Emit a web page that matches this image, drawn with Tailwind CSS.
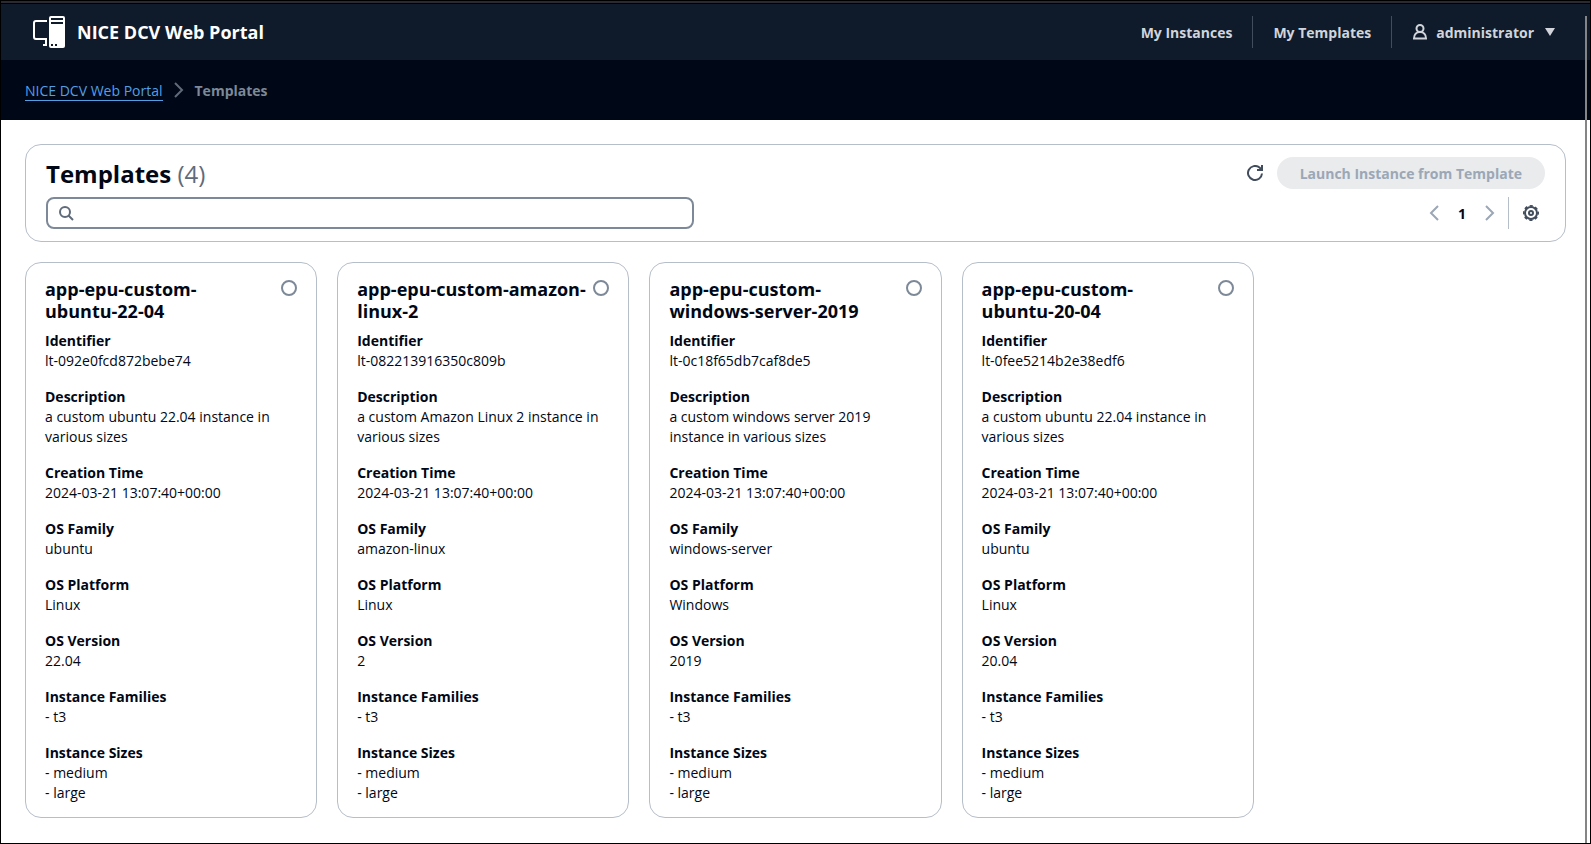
<!DOCTYPE html>
<html lang="en">
<head>
<meta charset="utf-8">
<meta name="viewport" content="width=device-width, initial-scale=1">
<title>NICE DCV Web Portal</title>
<script src="https://cdn.jsdelivr.net/npm/@tailwindcss/browser@4"></script>
</head>
<body class="relative flex min-h-screen flex-col border border-black bg-white font-['Open_Sans','Noto_Sans',sans-serif] text-sm leading-5 text-[#000716]">
  <div class="h-[3px] border-b border-black bg-[#2b2a33]"></div>

  <header class="flex h-14 items-center justify-between bg-[#0f1b2a] px-8">
    <a href="#" class="flex items-center gap-3 text-lg font-bold text-white">
      <svg class="size-8" viewBox="0 0 32 32" aria-hidden="true">
        <path d="M14 5H3a2 2 0 0 0-2 2v14a2 2 0 0 0 2 2h11M10 29H13v-5" fill="none" stroke="#fff" stroke-width="2"/>
        <rect x="16" y="0" width="16" height="32" rx="2" fill="#fff"/>
        <path d="M18 3h12M18 7h12" stroke="#0f1b2a" stroke-width="2"/>
        <path d="M18 28h2v2h-2zM22 28h2v2h-2z" fill="#0f1b2a"/>
      </svg>
      <span>NICE DCV Web Portal</span>
    </a>
    <nav class="flex items-center font-bold text-[#d1d5db]">
      <a href="#" class="px-5 pt-0.5">My Instances</a>
      <span class="h-8 w-px bg-[#414d5c]"></span>
      <a href="#" class="px-5 pt-0.5">My Templates</a>
      <span class="h-8 w-px bg-[#414d5c]"></span>
      <button type="button" class="flex items-center pl-5 font-bold">
        <svg class="mr-2 size-4" viewBox="0 0 16 16" fill="none" stroke="currentColor" stroke-width="2" aria-hidden="true">
          <circle cx="8" cy="4.500" r="3.500"/><path d="M2 14.500h12c0-4-2.500-6.500-6-6.500s-6 2.500-6 6.500z"/>
        </svg>
        <span class="pt-0.5">administrator</span>
        <svg class="ml-2 size-4" viewBox="0 0 16 16" fill="currentColor" aria-hidden="true"><path d="M3 4h10l-5 8z"/></svg>
      </button>
    </nav>
  </header>

  <nav aria-label="Breadcrumb" class="flex h-15 items-center bg-[#000716] px-6">
    <a href="#" class="border-b border-[#539fe5] pt-0.5 leading-[18px] text-[#539fe5]">NICE DCV Web Portal</a>
    <svg class="mx-2 size-4" viewBox="0 0 16 16" fill="none" stroke="#5f6b7a" stroke-width="2" aria-hidden="true"><path d="m4 1 7 7-7 7"/></svg>
    <span class="pt-0.5 font-bold text-[#7d8998]">Templates</span>
  </nav>

  <main class="flex flex-col gap-5 px-6 py-6">
    <section class="flex flex-col gap-2 rounded-2xl border border-[#b6bec9] px-5 py-3">
      <div class="flex items-center justify-between">
        <h1 class="pt-0.5 text-2xl font-bold leading-[30px]">Templates <span class="font-normal text-[#5f6b7a]">(4)</span></h1>
        <div class="flex items-center">
          <button type="button" aria-label="Refresh" class="px-3.5 text-[#414d5c]">
            <svg class="size-4" viewBox="0 0 16 16" fill="none" stroke="currentColor" stroke-width="2" aria-hidden="true"><path d="M15 8.500A7 7 0 1 1 12.500 2.600L15 5M15 0v5h-5"/></svg>
          </button>
          <button type="button" disabled class="h-8 rounded-full bg-[#e9ebed] px-[23px] pt-0.5 font-bold text-[#9ba7b6]">Launch Instance from Template</button>
        </div>
      </div>
      <div class="flex items-center justify-between">
        <label class="flex h-8 w-[648px] items-center rounded-lg border-2 border-[#7d8998] px-2.5">
          <svg class="size-4 shrink-0" viewBox="0 0 16 16" fill="none" stroke="#5f6b7a" stroke-width="2" aria-hidden="true"><circle cx="7" cy="7" r="5"/><path d="m10.500 10.500 4.500 4.500"/></svg>
          <input type="search" aria-label="Find templates" class="ml-2 w-full outline-none">
        </label>
        <div class="flex items-center pr-1.5">
          <button type="button" disabled aria-label="Previous page" class="text-[#9ba7b6]"><svg class="size-4" viewBox="0 0 16 16" fill="none" stroke="currentColor" stroke-width="2" aria-hidden="true"><path d="m12 1-7 7 7 7"/></svg></button>
          <button type="button" aria-current="page" class="w-10 pt-0.5 font-bold">1</button>
          <button type="button" disabled aria-label="Next page" class="text-[#9ba7b6]"><svg class="size-4" viewBox="0 0 16 16" fill="none" stroke="currentColor" stroke-width="2" aria-hidden="true"><path d="m4 1 7 7-7 7"/></svg></button>
          <span class="ml-2.5 mr-3.5 h-8 w-px bg-[#b6bec9]"></span>
          <button type="button" aria-label="Preferences" class="text-[#414d5c]">
            <svg class="size-4" viewBox="0 0 16 16" fill="none" stroke="currentColor" stroke-width="2" aria-hidden="true">
              <circle cx="8" cy="8" r="6"/>
              <circle cx="8" cy="8" r="7.250" stroke-width="1.500" stroke-dasharray="3.200 2.494" stroke-dashoffset="1.600"/>
              <circle cx="8" cy="8" r="2"/>
            </svg>
          </button>
        </div>
      </div>
    </section>

    <ul id="cards" class="grid grid-cols-5 gap-5"></ul>
  </main>

  <div class="absolute bottom-0 right-[3px] top-[15px] w-0.5 bg-[#858585]"></div>

  <template id="card">
    <li class="rounded-2xl border border-[#b6bec9] px-[19px] pb-3.5 pt-[15px]">
      <label class="flex items-start justify-between">
        <span class="text-lg font-bold leading-[22px]"><span data-prefix></span><wbr><span data-name class="whitespace-nowrap"></span></span>
        <input type="radio" name="template" class="mt-0.5 size-4 shrink-0 appearance-none rounded-full border-2 border-[#7d8998] checked:border-[5px] checked:border-[#0972d3]">
      </label>
      <dl class="mt-[9px] flex flex-col gap-4"></dl>
    </li>
  </template>

  <script>
    const labels = ["Identifier", "Description", "Creation Time", "OS Family", "OS Platform", "OS Version", "Instance Families", "Instance Sizes"];
    const time = "2024-03-21 13:07:40+00:00";
    const templates = [
      ["app-epu-custom-", "ubuntu-22-04", "lt-092e0fcd872bebe74", "a custom ubuntu 22.04 instance in various sizes", time, "ubuntu", "Linux", "22.04"],
      ["app-epu-custom-amazon-", "linux-2", "lt-082213916350c809b", "a custom Amazon Linux 2 instance in various sizes", time, "amazon-linux", "Linux", "2"],
      ["app-epu-custom-", "windows-server-2019", "lt-0c18f65db7caf8de5", "a custom windows server 2019 instance in various sizes", time, "windows-server", "Windows", "2019"],
      ["app-epu-custom-", "ubuntu-20-04", "lt-0fee5214b2e38edf6", "a custom ubuntu 22.04 instance in various sizes", time, "ubuntu", "Linux", "20.04"]
    ];
    for (const [prefix, name, ...values] of templates) {
      const card = document.getElementById("card").content.cloneNode(true);
      card.querySelector("[data-prefix]").textContent = prefix;
      card.querySelector("[data-name]").textContent = name;
      const list = card.querySelector("dl");
      [...values, "- t3", "- medium\n- large"].forEach((value, i) => {
        const row = document.createElement("div");
        const dt = document.createElement("dt");
        const dd = document.createElement("dd");
        dt.className = "font-bold";
        dd.className = "whitespace-pre-line";
        dt.textContent = labels[i];
        dd.textContent = value;
        row.append(dt, dd);
        list.append(row);
      });
      document.getElementById("cards").append(card);
    }
  </script>
</body>
</html>
